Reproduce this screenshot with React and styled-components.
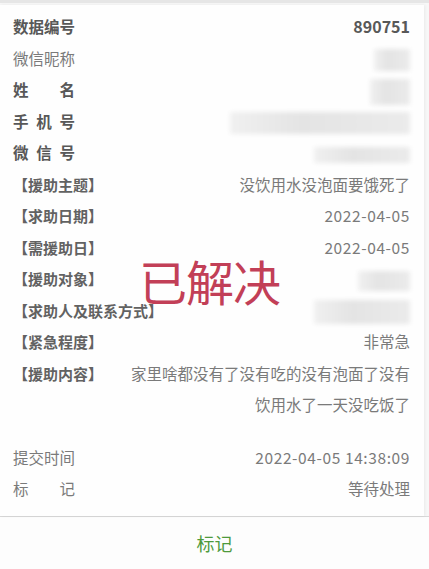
import React from 'react';
import styled, { createGlobalStyle } from 'styled-components';

const GlobalStyle = createGlobalStyle`
  html, body {
    margin: 0;
    padding: 0;
    background: #f7f7f7;
  }
  body {
    font-family: "Noto Sans CJK SC", "Noto Sans", sans-serif;
  }
`;

const Page = styled.div`
  width: 429px;
  height: 569px;
  display: flex;
  flex-direction: column;
  background: #f7f7f7;
  border-top: 3px solid #e6e6e6;
  box-sizing: border-box;
  overflow: hidden;
`;

const Card = styled.div`
  position: relative;
  margin: 2px 5px 0 0;
  padding: 6px 14px 10px 13px;
  background: #fefefe;
  box-shadow: 1px 0 3px rgba(0, 0, 0, 0.06);
  flex: 1;
`;

const Row = styled.div`
  display: flex;
  justify-content: space-between;
  align-items: flex-start;
  gap: 24px;
  min-height: 31.5px;
  line-height: 31.5px;
  margin-top: ${(p) => (p.$spaced ? '21px' : '0')};
`;

const Label = styled.div`
  flex-shrink: 0;
  font-size: 15.5px;
  color: ${(p) => (p.$light ? '#7a7a7a' : '#585858')};
  font-weight: ${(p) => (p.$light ? 400 : 700)};
  width: ${(p) => (p.$justify ? '62px' : 'auto')};
  text-align: ${(p) => (p.$justify ? 'justify' : 'left')};
  text-align-last: ${(p) => (p.$justify ? 'justify' : 'auto')};
  white-space: nowrap;
`;

const Bracket = styled.div`
  flex-shrink: 0;
  font-size: 15px;
  font-weight: 700;
  color: #626262;
  white-space: nowrap;
`;

const Value = styled.div`
  flex: 1;
  text-align: right;
  font-size: ${(p) => (p.$bold ? '16px' : '15.5px')};
  color: ${(p) => (p.$bold ? '#585858' : '#7a7a7a')};
  font-weight: ${(p) => (p.$bold ? 700 : 400)};
  letter-spacing: ${(p) => (p.$num ? '0.6px' : '0')};
`;

const Redact = styled.span`
  display: inline-block;
  vertical-align: middle;
  width: ${(p) => p.$w}px;
  height: ${(p) => p.$h || 22}px;
  background: linear-gradient(90deg, #f0f0f0, #e4e4e4 40%, #ebebeb);
  filter: blur(2px);
  border-radius: 2px;
`;

const Stamp = styled.div`
  position: absolute;
  left: 139px;
  top: 245px;
  font-size: 48px;
  line-height: 60px;
  color: #c23f57;
  letter-spacing: -1px;
  pointer-events: none;
`;

const Footer = styled.div`
  height: 52px;
  border-top: 1px solid #d9d9d9;
  background: #fdfdfd;
  display: flex;
  justify-content: center;
  align-items: center;
  font-size: 18px;
  color: #4e9a3c;
`;

const App = () => {
  return (
    <>
      <GlobalStyle />
      <Page>
        <Card>
          <Row>
            <Label>数据编号</Label>
            <Value $bold>890751</Value>
          </Row>
          <Row>
            <Label $light>微信昵称</Label>
            <Value><Redact $w={36} /></Value>
          </Row>
          <Row>
            <Label $justify>姓名</Label>
            <Value><Redact $w={40} $h={26} /></Value>
          </Row>
          <Row>
            <Label $justify>手机号</Label>
            <Value><Redact $w={180} /></Value>
          </Row>
          <Row>
            <Label $justify>微信号</Label>
            <Value><Redact $w={96} $h={16} /></Value>
          </Row>
          <Row>
            <Bracket>【援助主题】</Bracket>
            <Value>没饮用水没泡面要饿死了</Value>
          </Row>
          <Row>
            <Bracket>【求助日期】</Bracket>
            <Value $num>2022-04-05</Value>
          </Row>
          <Row>
            <Bracket>【需援助日】</Bracket>
            <Value $num>2022-04-05</Value>
          </Row>
          <Row>
            <Bracket>【援助对象】</Bracket>
            <Value><Redact $w={52} $h={20} /></Value>
          </Row>
          <Row>
            <Bracket>【求助人及联系方式】</Bracket>
            <Value><Redact $w={96} $h={24} /></Value>
          </Row>
          <Row>
            <Bracket>【紧急程度】</Bracket>
            <Value>非常急</Value>
          </Row>
          <Row>
            <Bracket>【援助内容】</Bracket>
            <Value>家里啥都没有了没有吃的没有泡面了没有饮用水了一天没吃饭了</Value>
          </Row>
          <Row $spaced>
            <Label $light>提交时间</Label>
            <Value $num>2022-04-05 14:38:09</Value>
          </Row>
          <Row>
            <Label $light $justify>标记</Label>
            <Value>等待处理</Value>
          </Row>
          <Stamp>已解决</Stamp>
        </Card>
        <Footer>标记</Footer>
      </Page>
    </>
  );
};

export default App;
